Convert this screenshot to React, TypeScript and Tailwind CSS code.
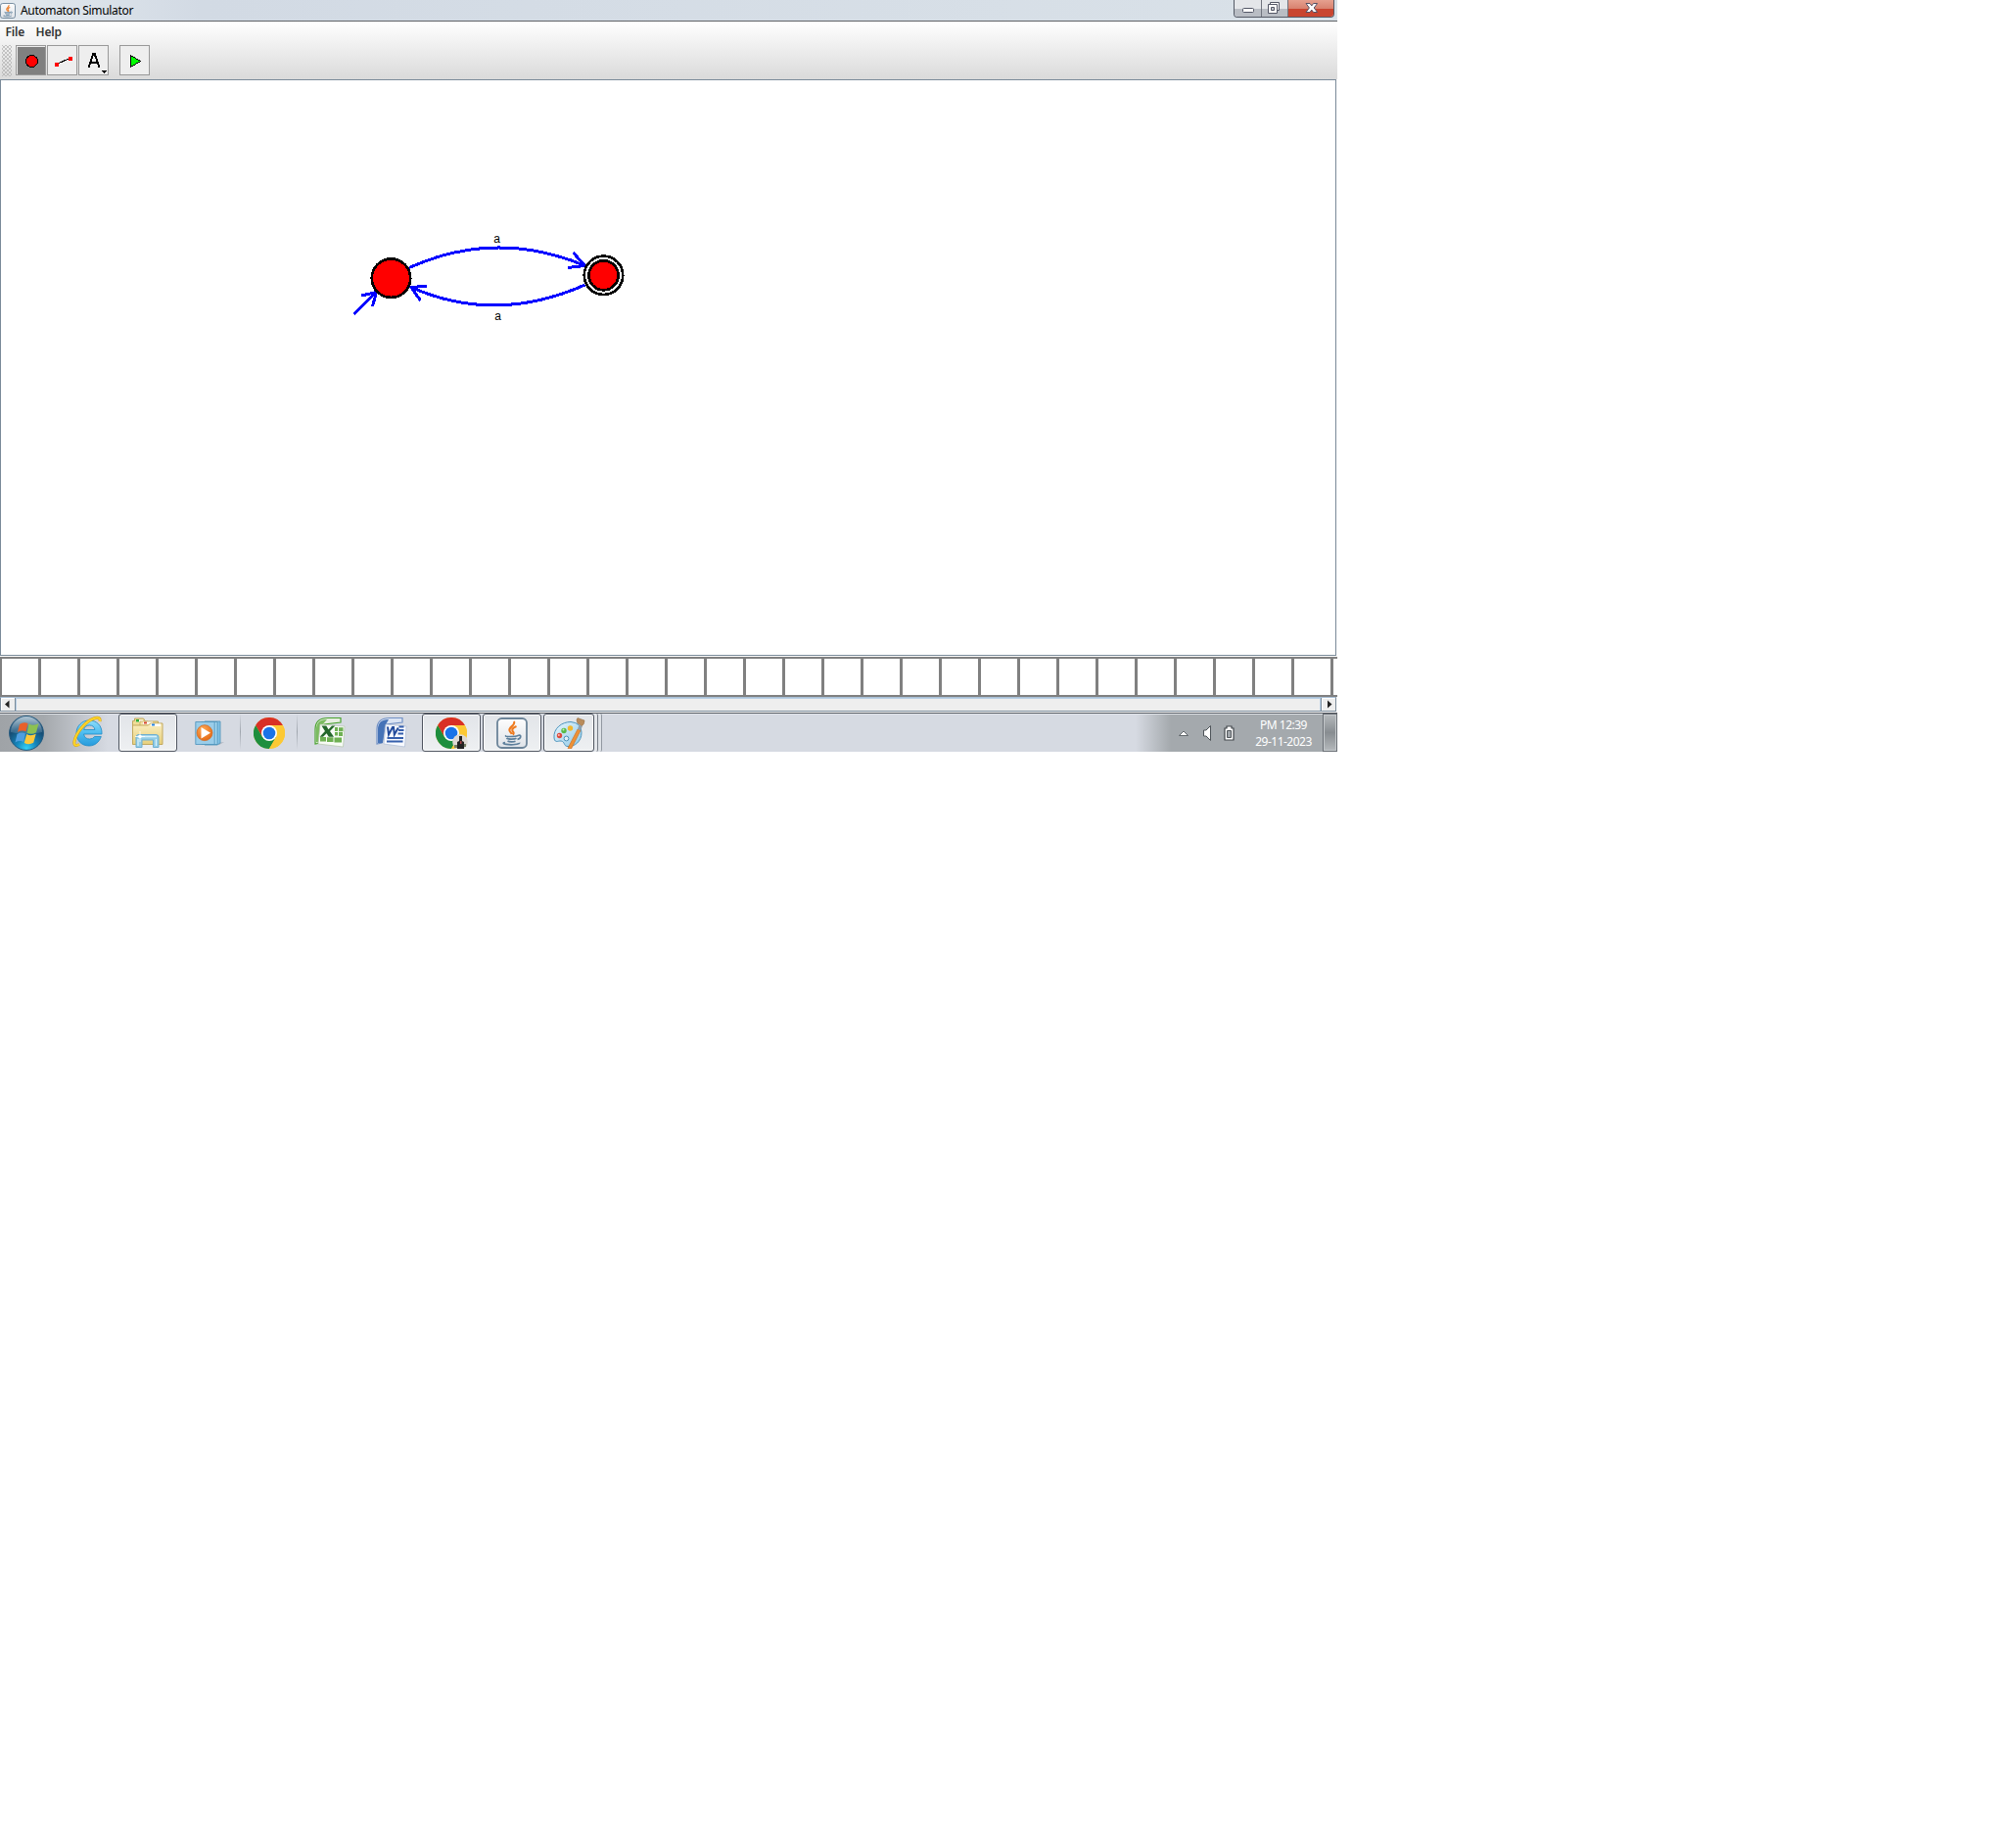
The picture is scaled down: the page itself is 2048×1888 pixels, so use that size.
import React from "react";

function JavaCup({ className }: { className: string }) {
  return (
    <svg viewBox="0 0 32 32" className={className}>
      <defs>
        <linearGradient id="cupBg" x1="0" y1="0" x2="0" y2="1">
          <stop offset="0" stopColor="#fdfdfd" />
          <stop offset="1" stopColor="#dfe3e8" />
        </linearGradient>
      </defs>
      <rect x="1" y="1" width="30" height="30" rx="4.5" fill="url(#cupBg)" stroke="#6c8499" strokeWidth="1.8" />
      <path d="M18 4c2 4-6 6-4.500 9.500 .5 1.500 1.800 2.300 2.200 3.500 M20.500 9c-5 2-5 4-3.200 6 .8 1 .2 2-.6 2.500" fill="none" stroke="#ee7a1f" strokeWidth="2.100" />
      <path d="M10 18.500c-3 1.200 9 1.500 12 0 M10.500 21c1 1.500 8 1.500 10 .2 M11.500 24c2 1.200 6 1.200 8 .2 M22 18.500c4-1.500 3.500 3-.5 3.800 M9 25.500c-6 1.500 5 2.800 10 2 3-.4 5-1 4.500-1.800" fill="none" stroke="#5d7f9b" strokeWidth="1.700" />
    </svg>
  );
}

function Chrome() {
  return (
    <svg viewBox="0 0 32 32" className="h-8 w-8">
      <circle cx="16" cy="16" r="16" fill="#fcc934" />
      <path d="M2.140 8A16 16 0 0 1 29.860 8H16L9 20Z" fill="#d93025" />
      <path d="M2.140 8A16 16 0 0 0 16 32L23 20H9Z" fill="#1e8e3e" />
      <path d="M29.860 8A16 16 0 0 1 16 32L23 20L16 8Z" fill="#fcc934" />
      <circle cx="16" cy="16" r="8" fill="#fff" />
      <circle cx="16" cy="16" r="6.300" fill="#1a73e8" />
    </svg>
  );
}

function StartOrb() {
  return (
    <svg viewBox="0 0 36 36" className="h-9 w-9">
      <defs>
        <radialGradient id="orb" cx=".5" cy=".95" r=".85">
          <stop offset="0" stopColor="#35d3f8" />
          <stop offset=".35" stopColor="#1686bb" />
          <stop offset=".75" stopColor="#164d74" />
          <stop offset="1" stopColor="#3c6583" />
        </radialGradient>
        <linearGradient id="gloss" x1="0" y1="0" x2="0" y2="1">
          <stop offset="0" stopColor="#e4f0f7" stopOpacity=".7" />
          <stop offset="1" stopColor="#7ea5bf" stopOpacity=".25" />
        </linearGradient>
      </defs>
      <circle cx="18" cy="18" r="17.400" fill="url(#orb)" stroke="#21587e" />
      <path d="M2 17A16 16 0 0 1 34 17Q18 21 2 17Z" fill="url(#gloss)" />
      <path d="M11 9q4-3 8.500-1l-2 8.500q-4-2-8.500 .5Z" fill="#e8602a" />
      <path d="M20.500 8.500q5 2.500 10-.3l-2.500 9q-4.500 2.800-9.500 .5Z" fill="#8cc152" />
      <path d="M8.500 19q4.500-2.500 8.500-.5l-2 8.500q-4-2-8.500 .5Z" fill="#4e9ee0" />
      <path d="M18.200 19q4.500 2.500 9.500-.3l-2.500 9q-4.500 2.800-9.500 .3Z" fill="#fdc93c" />
    </svg>
  );
}

function InternetExplorer() {
  return (
    <svg viewBox="0 0 32 32" className="h-8 w-8">
      <defs>
        <linearGradient id="ie" x1="0" y1="0" x2="0" y2="1">
          <stop offset="0" stopColor="#8fdcfa" />
          <stop offset=".5" stopColor="#4cbcf0" />
          <stop offset="1" stopColor="#279bdc" />
        </linearGradient>
      </defs>
      <path d="M30 19H11.500q1 5 6 5 3.500 0 5-2.500h6.800C27.500 27 23 31 17 31 9 31 4 25 4 18S9.500 5 17 5s13.500 5 13 14ZM11.700 14.500h11.200q-.8-4.500-5.500-4.500-4.800 0-5.700 4.500Z" fill="url(#ie)" stroke="#1d8ac6" strokeWidth=".8" />
      <path d="M7 29.500q-6 3-5-3C3.500 18 13 6 22 3q7-2.200 6 3" fill="none" stroke="#d9a010" strokeWidth="3" />
      <path d="M7 29.500q-6 3-5-3C3.500 18 13 6 22 3q7-2.200 6 3" fill="none" stroke="#fbd429" strokeWidth="2" />
    </svg>
  );
}

function Explorer() {
  return (
    <svg viewBox="0 0 34 32" className="h-8 w-[34px]">
      <defs>
        <linearGradient id="folder" x1="0" y1="0" x2="0" y2="1">
          <stop offset="0" stopColor="#fbefc0" />
          <stop offset="1" stopColor="#e6cf7c" />
        </linearGradient>
      </defs>
      <path d="M1.500 27V3.500h2V1h9l2 3h13v23Z" fill="#efdc97" stroke="#c3a95e" />
      <path d="M5 2.500h7v2H5z" fill="#fff" />
      <path d="M5 2h3v2.500H5z" fill="#2fae37" />
      <path d="M9 8.500V4h8l2 2.500h12.500V27H9z" fill="#f3e3a8" stroke="#c3a95e" strokeWidth=".8" />
      <path d="M12 4.500h10v2.500H12z" fill="#fff" />
      <path d="M13 4.500h3v2h-3z" fill="#d6452c" />
      <path d="M1.500 27.500V8h16l2-2h12.500v21.500Z" fill="url(#folder)" stroke="#c3a95e" />
      <path d="M20 6.500h10v2.500H20z" fill="#fff" />
      <path d="M21 6.500h3v2h-3z" fill="#2985e0" />
      <path d="M5 30.500V20q0-2.500 3-2.500h17q3 0 3 2.500v10.500h-5.500V23H11v7.500Z" fill="#93cde6" stroke="#6fafd0" />
      <path d="M7 19.500h19M7 22v7M25.500 22v7" stroke="#d7f1fb" strokeWidth="1.300" fill="none" />
      <path d="M9 14v11M4 19.500h10" stroke="#fff" strokeWidth=".8" />
      <circle cx="9" cy="19.500" r="1.800" fill="#fff" />
    </svg>
  );
}

function MediaPlayer() {
  return (
    <svg viewBox="0 0 30 26" className="h-[26px] w-[30px]">
      <defs>
        <radialGradient id="wmp" cx=".4" cy=".3" r=".8">
          <stop offset="0" stopColor="#ffab57" />
          <stop offset="1" stopColor="#e1600b" />
        </radialGradient>
      </defs>
      <path d="M22 23l8-1-5 3z" fill="#afb6c0" />
      <path d="M10 1h16v22l-3 2H10z" fill="#83c2e5" stroke="#4a90b8" strokeWidth=".8" />
      <path d="M7 1.500h16v23H7z" fill="#a5d6ef" stroke="#4a90b8" strokeWidth=".8" />
      <path d="M.8 1.500h19.400v23H.8z" fill="#9acde9" stroke="#4991bb" strokeWidth=".8" />
      <circle cx="10" cy="12.700" r="8" fill="url(#wmp)" stroke="#cf6a25" strokeWidth=".7" />
      <path d="M6.500 7v11.500l9.500-5.700Z" fill="#fff" />
    </svg>
  );
}

function Excel() {
  return (
    <svg viewBox="0 0 32 32" className="h-8 w-8">
      <path d="M1 28V13Q1 1.500 14 1.500H27V6L10 8 6 27Z" fill="#e6eee1" stroke="#4aa32f" strokeWidth="1.200" />
      <path d="M2 26V13Q2 3 13 3L7 10 5 27Z" fill="#7bbb60" />
      <path d="M6 8 31 10 29.500 31 4 28Z" fill="#f7fbf5" stroke="#b4c6ac" strokeWidth=".7" />
      <path d="M21 11h3v4h-3zM25 11.300h4.500v4H25zM21 16h3v3.500h-3zM25 16h4v4h-4zM6 21h6v4.500H6zM13 21.200h6.500V26H13zM20.500 21.500h7.500v5h-7.500z" fill="#6eb052" />
      <path d="M7.500 9.500h4.800l2.200 3.700 3.500-3.700h3.300L16 15l4 5.700h-5.200l-2.200-3.500L9 20.700H5.600L11 15Z" fill="#24672b" />
    </svg>
  );
}

function Word() {
  return (
    <svg viewBox="0 0 32 32" className="h-8 w-8">
      <path d="M1 28V13Q1 1.500 14 1.500H27V6L10 8 6 27Z" fill="#dbe4f3" stroke="#7190c5" strokeWidth="1.200" />
      <path d="M2 27V13Q2 3 13 3L9 10 7 27Z" fill="#4673b7" />
      <path d="M10 8 31 10 29.500 31 8 28Z" fill="#f8faff" stroke="#aebbd4" strokeWidth=".7" />
      <path d="M12 10.500l1 8 4-7.500h1l.8 7.500 4-7" fill="none" stroke="#244c9c" strokeWidth="2" />
      <path d="M23.500 10.500h5M23 14h5.500M22.500 17.500h5.500M11.500 22h16.500M11 25.500h16.500" stroke="#365fac" strokeWidth="1.800" />
    </svg>
  );
}

function Paint() {
  return (
    <svg viewBox="0 0 34 32" className="h-8 w-[34px]">
      <defs>
        <linearGradient id="palette" x1="0" y1="0" x2="1" y2="1">
          <stop offset="0" stopColor="#e8f6fd" />
          <stop offset="1" stopColor="#8fc9e8" />
        </linearGradient>
      </defs>
      <path d="M2 21C1 11 10 4.500 19 4.500q11 1 11 11c0 9-7 14.500-14 14-4 0-3-3.500-5.500-5C7 22.500 3 27.500 2 21Z" fill="url(#palette)" stroke="#4d95bd" />
      <circle cx="14.500" cy="21.500" r="2.400" fill="#e2eef5" stroke="#4990b8" />
      <circle cx="7.500" cy="18.500" r="2.700" fill="#dd4a3d" />
      <circle cx="12" cy="13.500" r="2.700" fill="#57b947" />
      <circle cx="18.500" cy="11" r="2.700" fill="#f2b72e" />
      <circle cx="6.800" cy="18" r="1" fill="#ffc1b9" />
      <circle cx="11.500" cy="12.500" r="1" fill="#c6f5b7" />
      <path d="M26 12l3 1.300L19.500 32l-3.500-.5Z" fill="#ee9136" stroke="#c8691d" strokeWidth=".6" />
      <path d="M26 12l3 1.300 2-4.500-3.500-1.500Z" fill="#8da0af" />
      <path d="M26 6q-2-4 0-5.500l7 2.500q0 4-2.500 5.500Z" fill="#b98c5b" stroke="#8e673d" strokeWidth=".5" />
    </svg>
  );
}

function TaskButton({ width, children }: { width: string; children: React.ReactNode }) {
  return (
    <div className={`${width} flex h-[39px] items-center justify-center rounded-[3px] border border-[#4f5560] bg-linear-to-b from-[#e2e5e9] to-[#eef0f2] shadow-[inset_0_0_0_1px_#f8f9fa]`}>
      {children}
    </div>
  );
}

function Separator() {
  return <div className="h-[37px] w-px bg-linear-to-b from-transparent via-[#9fa5ad] to-transparent" />;
}

function Tool({ active, children }: { active?: boolean; children: React.ReactNode }) {
  return (
    <div className={active ? "h-[31px] w-[31px] border border-[#999] bg-[#808080] shadow-[inset_1px_1px_0_#eee]" : "h-[31px] w-[31px] border border-[#999] bg-[#eee]"}>
      <svg viewBox="0 0 29 29" className="h-[29px] w-[29px]" shapeRendering="crispEdges">{children}</svg>
    </div>
  );
}

function Diagram() {
  return (
    <svg viewBox="1 82 1363 587" className="block h-[587px] w-[1363px]" shapeRendering="crispEdges">
      <g fill="none" stroke="#00f" strokeWidth="3">
        <path d="M418 273.500Q507 233.500 597.500 271.500M585.500 258 597.500 271.500 580 273.500" />
        <path d="M597.500 291Q506 331.500 420 293.500M436 292.300 420 293.500 429.500 307" />
        <path d="M361.200 321 384.500 298.500M369 302 384.500 298.500 380.500 313" />
      </g>
      <g stroke="#000" strokeWidth="2.700">
        <circle cx="399.500" cy="284.200" r="19.700" fill="#f00" />
        <circle cx="616.500" cy="281.300" r="19.700" fill="#fff" />
        <circle cx="616.500" cy="281.300" r="15" fill="#f00" />
      </g>
      <g fontFamily='"Liberation Sans", sans-serif' fontSize="12" textAnchor="middle" fill="#000">
        <text x="507.700" y="247.500">a</text>
        <text x="508.500" y="326.500">a</text>
      </g>
    </svg>
  );
}

function TitleBar() {
  return (
    <div className="flex h-[22px] border-b border-[#5f6266] bg-linear-to-r from-[#e3e9ee] via-[#d2dae4] via-15% to-[#d9e1e8]">
      <JavaCup className="mt-[3px] h-4 w-4" />
      <span className="ml-[5px] mt-[2px] text-[12px] leading-[18px] tracking-[-0.34px] text-black">Automaton Simulator</span>
      <div className="ml-auto mr-[3px] flex h-[18px] w-[103px] overflow-hidden rounded-b-[4px] border border-t-0 border-[#555a66]">
        <div className="w-7 border-r border-[#70747e] bg-linear-to-b from-[#e4e6e9] from-50% to-[#b9bdc4] to-55%">
          <svg viewBox="0 0 27 17" className="h-[17px] w-[27px]"><rect x="8.500" y="8.500" width="11" height="4" rx="1" fill="#fff" stroke="#535666" /></svg>
        </div>
        <div className="w-[27px] border-r border-[#70747e] bg-linear-to-b from-[#e4e6e9] from-50% to-[#b9bdc4] to-55%">
          <svg viewBox="0 0 26 17" className="h-[17px] w-[26px]">
            <path d="M8.500 2.500h9v8h-9z" fill="#fff" stroke="#535666" />
            <path d="M6.500 4.500h9v9h-9z" fill="#fff" stroke="#535666" />
            <path d="M9.500 7.500h3v3h-3z" fill="#bfc3ca" stroke="#535666" />
          </svg>
        </div>
        <div className="flex-1 bg-linear-to-b from-[#e5a08f] via-[#d88370] via-50% to-[#c94530] to-55%">
          <svg viewBox="0 0 46 17" className="h-[17px] w-[46px]">
            <path d="M18 3.500h4l1.800 2.400 1.800-2.400h4L26.200 8l3.400 4.500h-4L23.800 10.100l-1.800 2.400h-4L21.400 8Z" fill="#fff" stroke="#565265" />
          </svg>
        </div>
      </div>
    </div>
  );
}

function Toolbar() {
  return (
    <div className="flex h-[59px] flex-col bg-linear-to-b from-white to-[#dadada]">
      <div className="flex h-6 items-center pb-[2px] pl-[5.500px] text-[12px] font-semibold leading-none tracking-[-0.15px] text-[#333]">
        <span className="w-[31px]">File</span>
        <span>Help</span>
      </div>
      <div className="flex">
        <div className="ml-[2px] mr-1 h-8 w-[10px] bg-[radial-gradient(#aaa_0.6px,transparent_0.9px),radial-gradient(#aaa_0.6px,transparent_0.9px)] bg-[size:4px_4px] bg-[position:0_0,2px_2px]" />
        <div className="flex gap-px">
          <Tool active>
            <circle cx="15.500" cy="15.500" r="6" fill="#f00" stroke="#000" strokeWidth="1" />
          </Tool>
          <Tool>
            <path d="M9 18.500 22 12.500" stroke="#000" />
            <path d="M7 17h4v4H7zM21 11h4v4h-4z" fill="#f00" />
          </Tool>
          <Tool>
            <path d="M9.500 22 14.500 7.500h1L20.500 22M11.500 17h7.500" fill="none" stroke="#000" strokeWidth="2" />
            <path d="M22 25h6l-3 3z" fill="#000" />
          </Tool>
        </div>
        <div className="ml-[11px]">
          <Tool>
            <path d="M10.500 9.500v12l10-6Z" fill="#0f0" stroke="#000" />
          </Tool>
        </div>
      </div>
    </div>
  );
}

function Tape() {
  return (
    <div className="flex h-[41px] border-y-2 border-[#808080] bg-white">
      <div className="w-[2px] bg-[#808080]" />
      {Array.from({ length: 34 }, (_, i) => (
        <div key={i} className="w-10 shrink-0 border-r-3 border-[#808080]" />
      ))}
    </div>
  );
}

function ScrollBar() {
  return (
    <div className="mr-px flex h-[15px] justify-between border border-[#7a8a99] border-t-[#a9c0d6] bg-[#eee]">
      <div className="w-[15px] border-r border-[#7a8a99] shadow-[inset_1px_1px_0_#fff]">
        <svg viewBox="0 0 14 13" className="h-[13px] w-[14px]"><path d="M8.500 2.500v8L4 6.500Z" fill="#222" /></svg>
      </div>
      <div className="flex-1 border border-b-0 border-[#b8cfe5]" />
      <div className="w-[15px] border-l border-[#7a8a99] shadow-[inset_1px_1px_0_#fff]">
        <svg viewBox="0 0 14 13" className="h-[13px] w-[14px]"><path d="M6 2.500v8L10.500 6.500Z" fill="#222" /></svg>
      </div>
    </div>
  );
}

function TaskBar() {
  return (
    <div className="flex h-10 border-t border-[#51565e] bg-[linear-gradient(to_right,#9fa3a7_0,#a5a9ad_45px,#d6dae2_110px,#d6dae2_1160px,#a4a9ad_1196px,#a4a9ad_100%)] shadow-[inset_0_1px_0_#dfe3e8]">
      <div className="flex w-[54px] items-center justify-center"><StartOrb /></div>
      <div className="flex w-[67px] items-center justify-center pb-1 pl-1"><InternetExplorer /></div>
      <TaskButton width="w-[60px]"><Explorer /></TaskButton>
      <div className="flex w-16 items-center justify-center pl-[2px]"><MediaPlayer /></div>
      <Separator />
      <div className="flex w-[57px] items-center justify-center"><Chrome /></div>
      <Separator />
      <div className="flex w-[65px] items-center justify-center pb-[2px] pl-px"><Excel /></div>
      <div className="flex w-[62px] items-center justify-center pb-[2px]"><Word /></div>
      <TaskButton width="w-[60px]">
        <div className="relative h-8 w-8">
          <Chrome />
          <svg viewBox="0 0 16 16" className="absolute -bottom-px -right-px h-4 w-4">
            <circle cx="8" cy="8" r="7.800" fill="#ded9d3" />
            <path d="M5 15V8l2-1V2h3v5l2 1v7Z" fill="#222" />
            <path d="M2 11h3v3H2zM12 10h2v3h-2z" fill="#747d62" />
            <path d="M8 7h1.500v3H8z" fill="#a44" />
          </svg>
        </div>
      </TaskButton>
      <div className="w-[2px]" />
      <TaskButton width="w-[60px]"><JavaCup className="h-8 w-8" /></TaskButton>
      <div className="w-[2px]" />
      <TaskButton width="w-[52px]"><Paint /></TaskButton>
      <div className="h-[39px] w-1 rounded-r-[2px] border-r border-[#777d86] bg-[#e3e6ea]" />
      <div className="h-[39px] w-1 rounded-r-[2px] border-r border-[#9298a1] bg-[#dde1e6]" />
      <div className="ml-auto flex items-center">
        <svg viewBox="0 0 60 20" className="mr-5 h-5 w-[60px]">
          <path d="M3.500 12.500 8 8l4.500 4.500Z" fill="#fff" stroke="#555b60" strokeWidth=".9" />
          <path d="M28.500 7h2.500l4.500-4.500v15L31 13h-2.500Z" fill="#fff" stroke="#4e5459" />
          <path d="M53.500 2.500h5v2h2v12h-9v-12h2Z" transform="translate(-1.500 .5)" fill="#fff" stroke="#43484d" strokeWidth="1.200" />
          <path d="M52.500 7.500h4v7h-4z" fill="#a0a5aa" stroke="#43484d" strokeWidth=".9" />
        </svg>
        <div className="mr-[10px] w-[60px] whitespace-nowrap text-center text-[12px] leading-[17px] tracking-[-0.5px] text-white">
          <div>PM 12:39</div>
          <div>29-11-2023</div>
        </div>
        <div className="h-[39px] w-[15px] border border-[#6a6f75] bg-linear-to-b from-[#b6babd] via-[#888d91] via-50% to-[#b5b9bc] shadow-[inset_0_0_0_1px_#c5c9cc]" />
      </div>
    </div>
  );
}

export default function App() {
  return (
    <div className="min-h-[1888px] bg-white">
      <div className="flex h-[768px] w-[1366px] flex-col overflow-hidden font-['Noto_Sans',sans-serif]">
        <TitleBar />
        <Toolbar />
        <div className="mr-px h-[589px] border border-[#7a8a99] bg-white">
          <Diagram />
        </div>
        <div className="h-px bg-white" />
        <Tape />
        <ScrollBar />
        <div className="h-px bg-white" />
        <TaskBar />
      </div>
    </div>
  );
}
